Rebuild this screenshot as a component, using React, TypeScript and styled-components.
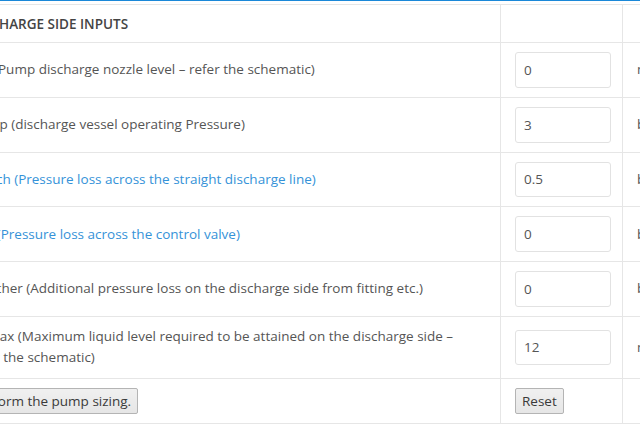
import styled, { createGlobalStyle } from "styled-components";

const GlobalStyle = createGlobalStyle`
  html, body {
    margin: 0;
    padding: 0;
    background: #fff;
    overflow: hidden;
  }
  body {
    font-family: "Open Sans", "Liberation Sans", sans-serif;
    font-size: 13.5px;
    color: #555;
  }
`;

type InputRow = {
  label: string;
  value: string;
  unit: string;
  link?: boolean;
};

const rows: InputRow[] = [
  { label: "Zdr (Pump discharge nozzle level – refer the schematic)", value: "0", unit: "m" },
  { label: "Pdesp (discharge vessel operating Pressure)", value: "3", unit: "bar" },
  {
    label: "ΔPfsch (Pressure loss across the straight discharge line)",
    value: "0.5",
    unit: "bar",
    link: true,
  },
  { label: "ΔPd (Pressure loss across the control valve)", value: "0", unit: "bar", link: true },
  {
    label: "ΔP other (Additional pressure loss on the discharge side from fitting etc.)",
    value: "0",
    unit: "bar",
  },
  {
    label:
      "Hdmax (Maximum liquid level required to be attained on the discharge side – refer the schematic)",
    value: "12",
    unit: "m",
  },
];

const App = () => {
  return (
    <>
      <GlobalStyle />
      <Page>
        <Viewport>
          <InputsTable>
            <colgroup>
              <col style={{ width: 546 }} />
              <col style={{ width: 122 }} />
              <col style={{ width: 120 }} />
            </colgroup>
            <thead>
              <tr>
                <HeadCell>Discharge side inputs</HeadCell>
                <HeadCell />
                <HeadCell />
              </tr>
            </thead>
            <tbody>
              {rows.map((row) => (
                <tr key={row.label}>
                  <LabelCell>
                    <Label $link={row.link}>{row.label}</Label>
                  </LabelCell>
                  <Cell>
                    <ValueInput type="text" defaultValue={row.value} />
                  </Cell>
                  <Cell>{row.unit}</Cell>
                </tr>
              ))}
              <tr>
                <LabelCell>
                  <SizingButton type="button">Perform the pump sizing.</SizingButton>
                </LabelCell>
                <Cell>
                  <Button type="button">Reset</Button>
                </Cell>
                <Cell />
              </tr>
            </tbody>
          </InputsTable>
        </Viewport>
      </Page>
    </>
  );
};

export default App;

const Page = styled.div`
  width: 640px;
  height: 426px;
  border-top: 1px solid #1a88d8;
  padding-top: 3px;
  box-sizing: border-box;
  background: #fff;
`;

const Viewport = styled.div`
  width: 640px;
  overflow: hidden;
`;

const InputsTable = styled.table`
  margin-left: -46px;
  border-collapse: collapse;
  table-layout: fixed;
  width: 788px;
`;

const HeadCell = styled.th`
  text-align: left;
  font-weight: 600;
  text-transform: uppercase;
  color: #444;
  line-height: 21px;
  padding: 9px 14px 7px;
  border: 1px solid #e6e6e6;
`;

const Cell = styled.td`
  vertical-align: middle;
  line-height: 21.5px;
  padding: 9px 14px;
  border: 1px solid #e6e6e6;
  color: #555;
`;

const LabelCell = styled(Cell)`
  padding-right: 30px;
`;

const Label = styled.span<{ $link?: boolean }>`
  color: ${({ $link }) => ($link ? "#3592d8" : "#555")};
`;

const ValueInput = styled.input`
  display: block;
  box-sizing: border-box;
  width: 96px;
  height: 35.8px;
  padding: 0 8px;
  border: 1px solid #e2e2e2;
  border-radius: 3px;
  font-family: "Open Sans", "Liberation Sans", sans-serif;
  font-size: 13.5px;
  color: #555;
  background: #fff;
  outline: none;
`;

const Button = styled.button`
  display: inline-block;
  box-sizing: border-box;
  height: 26px;
  padding: 0 6px;
  font-family: "Open Sans", "Liberation Sans", sans-serif;
  font-size: 13.5px;
  line-height: 22px;
  color: #3a3a3a;
  background: linear-gradient(#f0f0f0, #e6e6e6);
  border: 1px solid #b4b4b4;
  border-radius: 2px;
  vertical-align: middle;
`;

const SizingButton = styled(Button)`
  margin-left: -4px;
`;
